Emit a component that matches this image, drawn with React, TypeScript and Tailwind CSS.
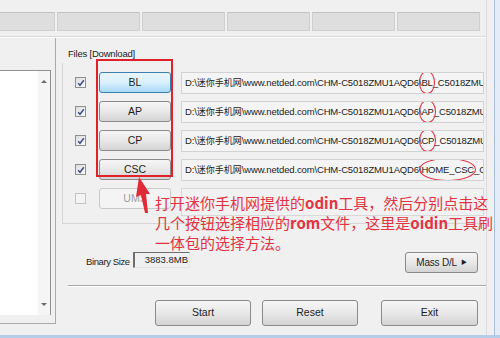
import React from "react";

const UI = { fontFamily: '"Liberation Sans", "Noto Sans CJK SC", sans-serif' };
const CJK = { fontFamily: '"Noto Sans CJK SC", "Liberation Sans", sans-serif' };

const btn =
  "flex items-center justify-center rounded-[3px] border border-[#8a8a8a] bg-gradient-to-b from-[#f6f6f6] via-[#e8e8e8] to-[#d4d4d4] text-[10.5px] text-[#1e1e1e]";

function Check({ on }: { on: boolean }) {
  return (
    <div className="flex h-[11px] w-[11px] items-center justify-center border border-[#8f8f8f] bg-gradient-to-br from-[#dcdcdc] to-[#fbfbfb]">
      {on && (
        <svg width="8" height="8" viewBox="0 0 8 8">
          <path d="M1.2 4.2 L3 6.3 L6.8 1.2" stroke="#3b4f8c" strokeWidth="1.5" fill="none" />
        </svg>
      )}
    </div>
  );
}

function Mark({ children }: { children: React.ReactNode }) {
  return (
    <span className="relative">
      {children}
      <span className="absolute -left-[2px] -right-[2px] -top-[6px] -bottom-[6px] rounded-[50%] border-[1.5px] border-[#e0283a]" />
    </span>
  );
}

const rows = [
  { label: "BL", on: true, hover: true, tag: "BL", rest: "_C5018ZMU1AQD6_CL" },
  { label: "AP", on: true, tag: "AP", rest: "_C5018ZMU1AQD6_CL" },
  { label: "CP", on: true, tag: "CP", rest: "_C5018ZMU1AQD6_CL" },
  { label: "CSC", on: true, tag: "HOME_CSC", rest: "_CHM_C5018ZMU1AQD6" },
];

export default function App() {
  return (
    <div className="relative flex h-[338px] w-[500px] flex-col overflow-hidden bg-[#f0f0f0]" style={UI}>
      <div className="flex h-[335px]">
        <div className="flex w-[487px] shrink-0 flex-col overflow-hidden border-r border-[#dcdcdc]">
          {/* top strip */}
          <div className="h-[37px] border-b border-[#dadada] pt-[12px]">
            <div className="ml-[-28px] flex gap-[2px]">
              {[0, 1, 2, 3, 4, 5].map((i) => (
                <div key={i} className="h-[19px] w-[83px] shrink-0 border border-[#cfcfcf] border-t-[#c2c2c2] bg-[#dedede]" />
              ))}
            </div>
          </div>

          <div className="flex flex-1 border-t border-white">
            {/* left list */}
            <div className="flex h-[286px] w-[56px] shrink-0 flex-col border-b border-r border-[#a9a9a9] pt-[32px]">
              <div className="flex h-[245px] w-[51px] border-r border-t border-[#8d9095] bg-white">
                <div className="flex-1" />
                <div className="flex w-[12px] flex-col items-center justify-between bg-[#f5f5f5] py-[9px]">
                  <div className="h-0 w-0 border-x-[3px] border-b-[3px] border-x-transparent border-b-[#6b6b6b]" />
                  <div className="h-0 w-0 border-x-[3px] border-t-[3px] border-x-transparent border-t-[#6b6b6b]" />
                </div>
              </div>
            </div>

            {/* right area */}
            <div className="ml-[6px] flex w-[424px] shrink-0 flex-col">
              <div className="ml-[6px] mt-[10px] whitespace-nowrap text-[9.5px] leading-[12px] tracking-[-0.2px] text-[#222]">
                Files [Download]
              </div>
              <div className="mt-[3px] flex h-[161px] flex-col gap-[8px] border-b border-l border-[#d6d6d6] pt-[9px]">
                {rows.map((r) => (
                  <div key={r.label} className="flex h-[21px] w-[421px] items-center">
                    <div className="ml-[12px] w-[24px] shrink-0">
                      <Check on={r.on} />
                    </div>
                    <div
                      className={
                        r.hover
                          ? "flex h-[21px] w-[72px] shrink-0 items-center justify-center rounded-[3px] border border-[#3c7fb1] bg-gradient-to-b from-[#eaf6fd] via-[#d9f0fc] to-[#a7d9f5] text-[10.5px] text-[#1e1e1e]"
                          : btn + " h-[21px] w-[72px] shrink-0"
                      }
                    >
                      {r.label}
                    </div>
                    <div className="ml-[10px] h-[22px] w-[303px] shrink-0 overflow-hidden whitespace-nowrap border border-[#d2d2d2] bg-[#f4f4f4] pl-[3px] text-[9.5px] leading-[20px] tracking-[-0.15px] text-[#222]">
                      <span>{"D:\\"}</span>
                      <span className="text-[9px] tracking-[0px]" style={CJK}>
                        迷你手机网
                      </span>
                      <span>{"\\www.netded.com\\CHM-C5018ZMU1AQD6\\"}</span>
                      <Mark>{r.tag}</Mark>
                      <span>{r.rest}</span>
                    </div>
                  </div>
                ))}
                <div className="flex h-[21px] w-[421px] items-center">
                  <div className="ml-[12px] w-[24px] shrink-0">
                    <div className="h-[11px] w-[11px] border border-[#c4c4c4] bg-[#f4f4f4]" />
                  </div>
                  <div className="flex h-[21px] w-[72px] shrink-0 items-center justify-center rounded-[3px] border border-[#c9c9c9] bg-[#f4f4f4] text-[10.5px] text-[#a0a0a0]">
                    UMS
                  </div>
                  <div className="ml-[10px] h-[28px] w-[303px] shrink-0 self-start border border-[#d8d8d8] bg-[#f2f2f2]" />
                </div>
              </div>

              {/* binary size + mass */}
              <div className="mt-[28px] flex items-start">
                <div className="ml-[24px] mt-[3px] w-[44px] shrink-0 whitespace-nowrap text-[9.5px] tracking-[-0.4px] text-[#222]">
                  Binary Size
                </div>
                <div className="ml-[3px] flex h-[16px] w-[57px] shrink-0 items-center justify-end border-b border-l-2 border-r border-t border-[#6e6e6e] border-b-[#e4e4e4] border-r-[#e4e4e4] pr-[1px] text-[9.5px] text-[#222]">
                  3883.8MB
                </div>
                <div className={btn + " ml-[215px] h-[21px] w-[73px] shrink-0 gap-[4px] text-[10px] tracking-[-0.2px]"}>
                  Mass D/L <span className="text-[6px]">▶</span>
                </div>
              </div>

              <div className="ml-[6px] mt-[12px] h-[2px] w-[418px] border-b border-t border-[#a8a8a8] border-b-white" />

              <div className="mt-[13px] flex">
                <div className={btn + " ml-[93px] h-[26px] w-[96px] shrink-0"}>Start</div>
                <div className={btn + " ml-[11px] h-[26px] w-[96px] shrink-0"}>Reset</div>
                <div className={btn + " ml-[23px] h-[26px] w-[97px] shrink-0"}>Exit</div>
              </div>
            </div>
          </div>
        </div>
        <div className="w-[7px] bg-[#f0f0f0]" />
        <div className="w-[6px] border-l border-[#a8c0dc] bg-[#e4edf7]" />
      </div>
      <div className="h-[3px] bg-[#b5cde9]" />

      {/* red annotation: box around buttons */}
      <div className="absolute left-[96px] top-[59px] h-[118px] w-[77px] border-2 border-[#e0202a]" />

      {/* red arrow */}
      <svg className="absolute left-[128px] top-[174px]" width="30" height="44" viewBox="0 0 30 44">
        <polygon points="11,3 22,20 18,20 20,39 17,39 13,21 8,23" fill="#e02a35" />
      </svg>

      {/* red annotation text */}
      <div className="absolute left-[155px] top-[193px] whitespace-nowrap text-[15px] leading-[20px] text-[#e33341]" style={CJK}>
        <div>
          打开迷你手机网提供的<b>odin</b>工具，然后分别点击这
        </div>
        <div>
          几个按钮选择相应的<b>rom</b>文件，这里是<b>oidin</b>工具刷
        </div>
        <div>一体包的选择方法。</div>
      </div>
    </div>
  );
}
